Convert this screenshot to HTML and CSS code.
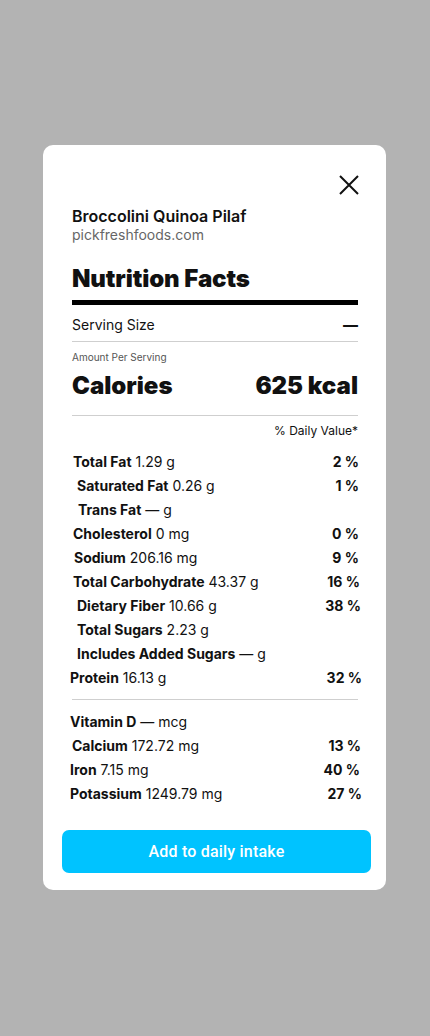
FILE: index.html
```html
<!DOCTYPE html>
<html lang="en">
<head>
<meta charset="utf-8">
<title>Nutrition Facts</title>
<link rel="stylesheet" href="styles.css">
</head>
<body>
<div class="overlay">
  <div class="card">
    <div class="close-row">
      <button class="close" aria-label="Close">
        <svg width="20" height="20" viewBox="0 0 20 20"><path d="M1 1 L19 19 M19 1 L1 19" stroke="#111" stroke-width="2" fill="none"/></svg>
      </button>
    </div>
    <div class="title">Broccolini Quinoa Pilaf</div>
    <div class="source">pickfreshfoods.com</div>
    <h1 class="facts">Nutrition Facts</h1>
    <div class="thick"></div>
    <div class="serving"><span>Serving Size</span><span class="serving-val">—</span></div>
    <div class="amount">Amount Per Serving</div>
    <div class="calories"><span>Calories</span><span>625 kcal</span></div>
    <div class="dv">% Daily Value*</div>
    <div class="rows">
      <div class="row r-fat"><span><b>Total Fat</b> 1.29 g</span><b>2 %</b></div>
      <div class="row r-sat"><span><b>Saturated Fat</b> 0.26 g</span><b>1 %</b></div>
      <div class="row r-trans"><span><b>Trans Fat</b> — g</span></div>
      <div class="row r-chol"><span><b>Cholesterol</b> 0 mg</span><b>0 %</b></div>
      <div class="row r-sod"><span><b>Sodium</b> 206.16 mg</span><b>9 %</b></div>
      <div class="row r-carb"><span><b>Total Carbohydrate</b> 43.37 g</span><b>16 %</b></div>
      <div class="row r-fib"><span><b>Dietary Fiber</b> 10.66 g</span><b>38 %</b></div>
      <div class="row r-sug"><span><b>Total Sugars</b> 2.23 g</span></div>
      <div class="row r-add"><span><b>Includes Added Sugars</b> — g</span></div>
      <div class="row r-prot"><span><b>Protein</b> 16.13 g</span><b>32 %</b></div>
    </div>
    <div class="thin"></div>
    <div class="rows vit">
      <div class="row r-vd"><span><b>Vitamin D</b> — mcg</span></div>
      <div class="row r-ca"><span><b>Calcium</b> 172.72 mg</span><b>13 %</b></div>
      <div class="row r-fe"><span><b>Iron</b> 7.15 mg</span><b>40 %</b></div>
      <div class="row r-k"><span><b>Potassium</b> 1249.79 mg</span><b>27 %</b></div>
    </div>
    <button class="add">Add to daily intake</button>
  </div>
</div>
</body>
</html>
```

FILE: styles.css
```css
* { box-sizing: border-box; }
html, body { margin: 0; padding: 0; }
body {
  background: #b3b3b3;
  font-family: Inter, "Noto Sans", sans-serif;
  color: #111;
  width: 430px;
  height: 1036px;
}
.overlay {
  padding: 145px 0 0 43px;
  display: flex;
}
.card {
  width: 343px;
  background: #fff;
  border-radius: 10px;
  padding: 30px 28px 17px 29px;
  display: flex;
  flex-direction: column;
}
.close-row { display: flex; justify-content: flex-end; height: 20px; }
.close {
  border: 0; background: none; padding: 0; margin: 0 -1px 0 0;
  width: 20px; height: 20px; display: block; cursor: pointer;
}
.close svg { display: block; }
.title {
  margin-top: 11px;
  font-size: 16px;
  line-height: 20px;
  font-weight: 600;
}
.source {
  font-size: 14px;
  line-height: 18px;
  color: #666;
}
.facts {
  margin: 19px 0 0;
  font-size: 24px;
  line-height: 32px;
  font-weight: 900;
  letter-spacing: -0.1px;
}
.thick { height: 5px; background: #000; margin-top: 5px; }
.serving {
  display: flex; justify-content: space-between;
  padding: 10px 0 6px;
  font-size: 14px; line-height: 20px;
  border-bottom: 1px solid #cfcfcf;
}
.serving-val { font-weight: 800; font-size: 15px; }
.amount {
  margin-top: 9px;
  font-size: 10px; line-height: 12px; color: #555;
}
.calories {
  display: flex; justify-content: space-between;
  margin-top: 8px;
  font-size: 24px; line-height: 30px; font-weight: 900;
  padding-bottom: 14px;
  border-bottom: 1px solid #cfcfcf;
}
.dv {
  margin-top: 7px;
  text-align: right;
  font-size: 12px; line-height: 16px;
}
.rows { margin-top: 11px; display: flex; flex-direction: column; }
.row {
  display: flex; justify-content: space-between;
  font-size: 14px; line-height: 24px; font-weight: 400;
}
.row b { font-weight: 700; }
.thin { height: 1px; background: #cfcfcf; margin-top: 9px; }
.vit { margin-top: 10px; }

.r-fat  { margin-left: 1px; margin-right: -1px; }
.r-sat  { margin-left: 5px; margin-right: -1px; }
.r-trans{ margin-left: 6px; }
.r-chol { margin-left: 1px; margin-right: -1px; }
.r-sod  { margin-left: 2px; margin-right: -1px; }
.r-carb { margin-left: 1px; margin-right: -2px; }
.r-fib  { margin-left: 5px; margin-right: -3px; }
.r-sug  { margin-left: 5px; }
.r-add  { margin-left: 5px; }
.r-prot { margin-left: -2px; margin-right: -4px; }
.r-vd   { margin-left: -2px; }
.r-ca   { margin-left: 0; margin-right: -3px; }
.r-fe   { margin-left: -2px; margin-right: -2px; }
.r-k    { margin-left: -2px; margin-right: -4px; }

.add {
  margin: 24px -13px 0 -10px;
  height: 43px;
  border: 0;
  border-radius: 7px;
  background: #00c3ff;
  color: #fff;
  font-family: Roboto, sans-serif;
  font-weight: 500;
  font-size: 16px;
  letter-spacing: 0.2px;
}
```
